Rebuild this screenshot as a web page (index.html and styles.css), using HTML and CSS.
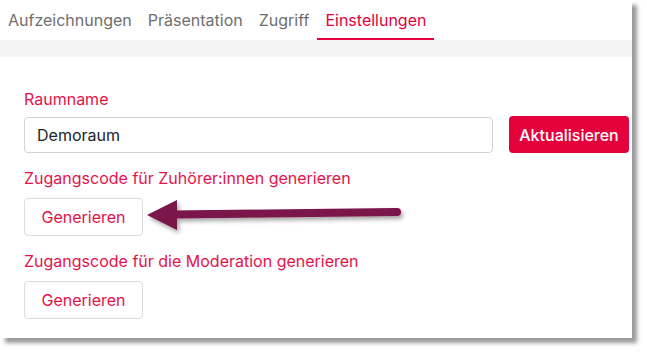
FILE: index.html
```html
<!DOCTYPE html>
<html lang="de">
<head>
    <meta charset="UTF-8">
    <meta name="viewport" content="width=device-width, initial-scale=1.0">
    <title>Einstellungen</title>
    <link rel="stylesheet" href="styles.css">
</head>
<body>
    <div class="frame">
        <nav class="tabs">
            <a class="tab">Aufzeichnungen</a>
            <a class="tab">Präsentation</a>
            <a class="tab">Zugriff</a>
            <a class="tab active">Einstellungen</a>
        </nav>
        <div class="band"></div>
        <div class="card">
            <label class="field-label" for="roomName">Raumname</label>
            <div class="row">
                <input type="text" id="roomName" class="text-input" value="Demoraum">
                <button class="btn-primary">Aktualisieren</button>
            </div>

            <div class="field-label gap-top">Zugangscode für Zuhörer:innen generieren</div>
            <button class="btn-outline">Generieren</button>

            <div class="field-label gap-top">Zugangscode für die Moderation generieren</div>
            <button class="btn-outline">Generieren</button>
        </div>

        <svg class="arrow" width="647" height="354" viewBox="0 0 647 354">
            <defs>
                <filter id="shadow" x="-10%" y="-50%" width="130%" height="250%">
                    <feDropShadow dx="2" dy="3" stdDeviation="2" flood-color="#000" flood-opacity="0.35"/>
                </filter>
            </defs>
            <g filter="url(#shadow)" fill="#7a1249" stroke="#7a1249">
                <line x1="172" y1="214.5" x2="397" y2="212" stroke-width="8" stroke-linecap="round"/>
                <polygon points="147,215 177,200 177,230" stroke="none"/>
            </g>
        </svg>
    </div>
</body>
</html>
```

FILE: styles.css
```css
html, body { background: #ffffff; }
body { margin: 0; min-height: 354px; font-family: Inter, "Noto Sans", sans-serif; font-size: 16px; }
.frame { position: relative; width: 632px; height: 338px; background: #ffffff; box-shadow: 5px 5px 4px rgba(0,0,0,0.4); }
.tabs { display: flex; height: 40px; background: #ffffff; }
.tab { padding: 8px 8px 6px; line-height: 24px; color: #6e6e6e; border-bottom: 2px solid transparent; }
.tab.active { color: #e2003d; border-bottom-color: #e2003d; }
.band { height: 17px; background: #f3f3f3; }
.card { background: #ffffff; border-radius: 4px 0 0 0; padding: 30px 3px 0 24px; }
.field-label { display: block; line-height: 24px; color: #e5124a; }
.gap-top { margin-top: 13px; margin-bottom: 8px; }
.row { display: flex; gap: 16px; margin-top: 6px; }
.text-input { flex: 1; height: 36px; box-sizing: border-box; border: 1px solid #cfd4dc; border-radius: 4px; padding: 0 12px; font: inherit; color: #212529; }
.btn-primary { width: 120px; height: 37px; margin-top: -1px; border: none; border-radius: 4px; background: #e4003b; color: #ffffff; font: inherit; font-weight: 500; }
.btn-outline { display: block; width: 119px; height: 38px; box-sizing: border-box; border: 1.5px solid #dcdcdc; border-radius: 4px; background: #ffffff; color: #e5124a; font: inherit; }
.arrow { position: absolute; left: 0; top: 0; pointer-events: none; }
```
